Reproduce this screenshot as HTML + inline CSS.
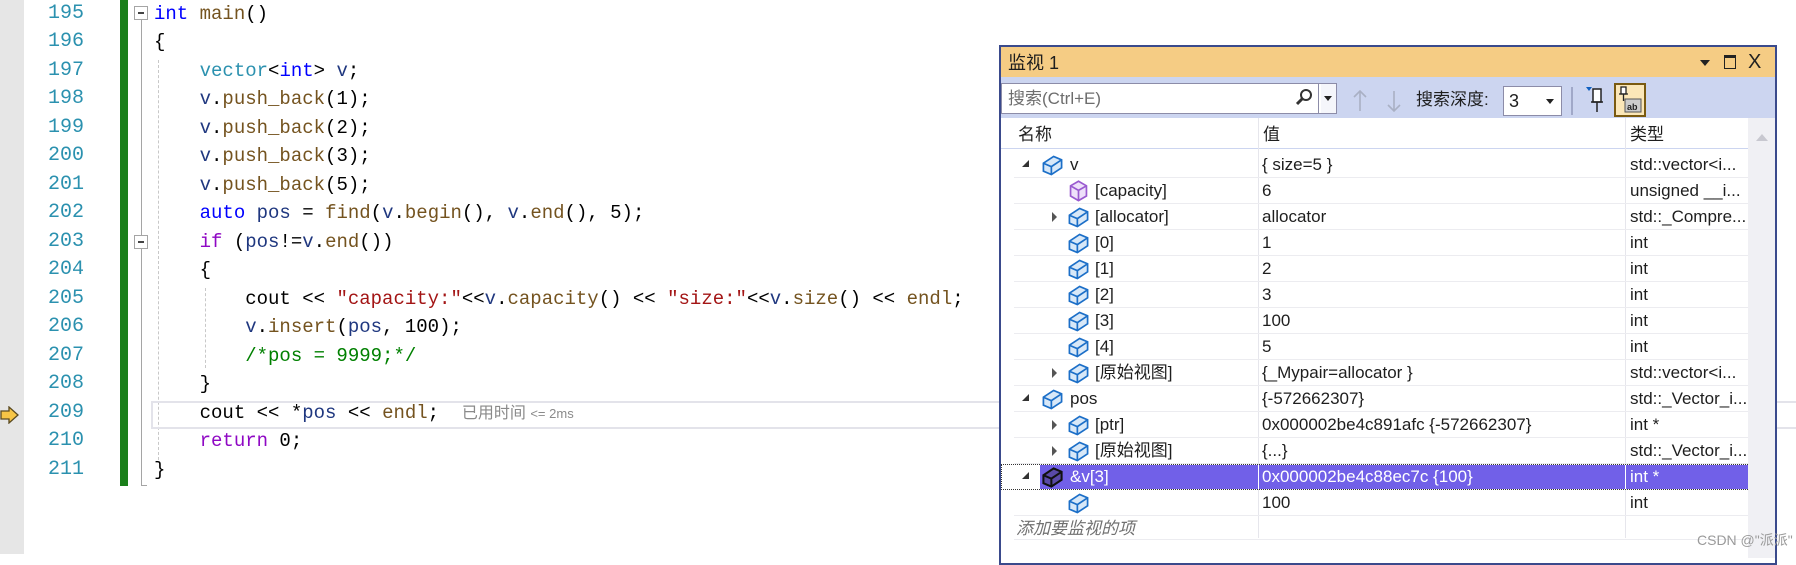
<!DOCTYPE html>
<html><head><meta charset="utf-8"><style>
*{margin:0;padding:0;box-sizing:border-box}
body{width:1796px;height:554px;overflow:hidden;background:#fff;position:relative;font-family:"Liberation Sans","Noto Sans CJK SC",sans-serif}
.abs{position:absolute}
.ln{position:absolute;left:30px;width:54px;text-align:right;color:#2b91af;font-family:"Liberation Mono","Noto Sans CJK SC",monospace;font-size:20px;line-height:28.5px}
.code{position:absolute;left:154px;font-family:"Liberation Mono","Noto Sans CJK SC",monospace;font-size:19px;line-height:28.5px;white-space:pre;color:#000}
.k{color:#0000ff}.t{color:#2b91af}.f{color:#74531f}.s{color:#a31515}.c{color:#008000}.r{color:#8f08c4}.v{color:#1f377f}
.w{font-size:17px;color:#1e1e1e;white-space:nowrap;line-height:20px}
.row{position:absolute;left:1014px;width:734px;height:26px;border-bottom:1px solid #ececf0}
.row span{position:absolute;top:3px}
.row svg{position:absolute;top:1px}
</style></head><body>
<div class="abs" style="left:0;top:0;width:24px;height:554px;background:#e6e6e6"></div>
<div class="ln" style="top:-0.5px">195<br>196<br>197<br>198<br>199<br>200<br>201<br>202<br>203<br>204<br>205<br>206<br>207<br>208<br>209<br>210<br>211</div>
<div class="abs" style="left:120px;top:0;width:8px;height:486px;background:#1a7f1a"></div>
<div class="abs" style="left:141px;top:20px;width:1px;height:466px;background:#a5a5a5"></div>
<div class="abs" style="left:141px;top:485px;width:6px;height:1px;background:#a5a5a5"></div>
<div class="abs" style="left:134px;top:6px;width:14px;height:14px;border:1px solid #a5a5a5;background:#fff"><div style="position:absolute;left:3px;top:5px;width:6px;height:1.5px;background:#444"></div></div>
<div class="abs" style="left:134px;top:235px;width:14px;height:14px;border:1px solid #a5a5a5;background:#fff"><div style="position:absolute;left:3px;top:5px;width:6px;height:1.5px;background:#444"></div></div>
<div class="abs" style="left:158px;top:60px;width:0;height:400px;border-left:1px dashed #c8c8c8"></div>
<div class="abs" style="left:205px;top:288px;width:0;height:80px;border-left:1px dashed #c8c8c8"></div>
<div class="abs" style="left:151px;top:401px;width:1660px;height:28px;border:2px solid #e3e3ea"></div>
<svg class="abs" style="left:0;top:406px" width="20" height="18" viewBox="0 0 20 18"><path d="M1 5 H9 V1 L18 9 L9 17 V13 H1 Z" fill="#f6c546" stroke="#5a4a20" stroke-width="1.3"/></svg>
<div class="code" style="top:-0.5px"><span class="k">int</span> <span class="f">main</span>()
{
    <span class="t">vector</span>&lt;<span class="k">int</span>&gt; <span class="v">v</span>;
    <span class="v">v</span>.<span class="f">push_back</span>(1);
    <span class="v">v</span>.<span class="f">push_back</span>(2);
    <span class="v">v</span>.<span class="f">push_back</span>(3);
    <span class="v">v</span>.<span class="f">push_back</span>(5);
    <span class="k">auto</span> <span class="v">pos</span> = <span class="f">find</span>(<span class="v">v</span>.<span class="f">begin</span>(), <span class="v">v</span>.<span class="f">end</span>(), 5);
    <span class="r">if</span> (<span class="v">pos</span>!=<span class="v">v</span>.<span class="f">end</span>())
    {
        cout &lt;&lt; <span class="s">"capacity:"</span>&lt;&lt;<span class="v">v</span>.<span class="f">capacity</span>() &lt;&lt; <span class="s">"size:"</span>&lt;&lt;<span class="v">v</span>.<span class="f">size</span>() &lt;&lt; <span class="f">endl</span>;
        <span class="v">v</span>.<span class="f">insert</span>(<span class="v">pos</span>, 100);
        <span class="c">/*pos = 9999;*/</span>
    }
    cout &lt;&lt; *<span class="v">pos</span> &lt;&lt; <span class="f">endl</span>;  <span style="color:#8a8a8a;font-family:'Liberation Sans','Noto Sans CJK SC',sans-serif;font-size:16px;line-height:20px">已用时间 <span style="font-size:13px">&lt;= 2ms</span></span>
    <span class="r">return</span> 0;
}</div>

<div class="abs" style="left:999px;top:45px;width:778px;height:520px;border:2px solid #3a4a8c;background:#fff"></div>
<div class="abs" style="left:1001px;top:47px;width:774px;height:30px;background:#f5cc84"></div>
<div class="abs w" style="left:1008px;top:52px;font-size:18px;line-height:22px">监视 1</div>
<div class="abs" style="left:1700px;top:60px;width:0;height:0;border-left:5px solid transparent;border-right:5px solid transparent;border-top:6px solid #222"></div>
<div class="abs" style="left:1724px;top:55px;width:12px;height:14px;border:1.5px solid #222;border-top-width:3px"></div>
<div class="abs w" style="left:1748px;top:51px;font-size:20px;color:#222;line-height:22px">X</div>
<div class="abs" style="left:1001px;top:77px;width:774px;height:41px;background:#ccd5f0"></div>
<div class="abs" style="left:1001px;top:83px;width:336px;height:31px;border:1.5px solid #8c8ca8;background:#fff"></div>
<div class="abs w" style="left:1008px;top:89px;color:#6d6d6d">搜索(Ctrl+E)</div>
<svg class="abs" style="left:1294px;top:88px" width="20" height="20"><circle cx="12" cy="7" r="5" fill="none" stroke="#333" stroke-width="2"/><path d="M8.5 10.5 L3 16" stroke="#333" stroke-width="3"/></svg>
<div class="abs" style="left:1318px;top:84px;width:1px;height:29px;background:#8c8ca8"></div>
<div class="abs" style="left:1321px;top:84px;width:15px;height:29px;background:#f5f6fb"></div>
<div class="abs" style="left:1324px;top:96px;border-left:4px solid transparent;border-right:4px solid transparent;border-top:5px solid #222"></div>
<svg class="abs" style="left:1352px;top:87px" width="60" height="28"><path d="M8 24 V4 M2 10 L8 4 L14 10" fill="none" stroke="#a9b0c4" stroke-width="1.6"/><path d="M42 4 V24 M36 18 L42 24 L48 18" fill="none" stroke="#a9b0c4" stroke-width="1.6"/></svg>
<div class="abs w" style="left:1416px;top:90px">搜索深度:</div>
<div class="abs" style="left:1503px;top:86px;width:59px;height:30px;border:1.5px solid #8c8ca8;background:#fff"></div>
<div class="abs w" style="left:1509px;top:91px;font-size:18px">3</div>
<div class="abs" style="left:1546px;top:99px;border-left:4px solid transparent;border-right:4px solid transparent;border-top:5px solid #222"></div>
<div class="abs" style="left:1571px;top:87px;width:2px;height:28px;background:#a0a8c8"></div>
<svg class="abs" style="left:1584px;top:85px" width="26" height="30"><path d="M2 2 L8 2 L5 6Z" fill="#1060c0"/><rect x="9" y="4" width="8" height="13" fill="#fff" stroke="#222" stroke-width="1.5"/><path d="M7 17 H19 M13 17 V27" stroke="#222" stroke-width="1.5"/></svg>
<div class="abs" style="left:1614px;top:83px;width:32px;height:34px;border:2px solid #7a5a10;background:#fbe7b8"></div>
<svg class="abs" style="left:1616px;top:85px" width="28" height="30"><rect x="5" y="2" width="5" height="7" fill="#fff" stroke="#222" stroke-width="1.3"/><path d="M3 9 H12 M7.5 9 V16" stroke="#222" stroke-width="1.3"/><rect x="9" y="14" width="16" height="13" fill="#ccc" stroke="#555"/><text x="11" y="25" font-size="9" font-family="Liberation Sans" font-weight="bold" fill="#222">ab</text></svg>
<div class="abs" style="left:1001px;top:118px;width:747px;height:31px;border-bottom:1.5px solid #ccd5f0"></div>
<div class="abs w" style="left:1018px;top:125px">名称</div>
<div class="abs w" style="left:1263px;top:125px">值</div>
<div class="abs w" style="left:1630px;top:125px">类型</div>
<div class="abs" style="left:1748px;top:118px;width:27px;height:440px;background:#f0f0f4"></div>
<div class="abs" style="left:1756px;top:134px;border-left:6px solid transparent;border-right:6px solid transparent;border-bottom:7px solid #c8c8d0"></div>
<div class="abs" style="left:1258px;top:118px;width:1px;height:420px;background:#e6e6ec"></div>
<div class="abs" style="left:1625px;top:118px;width:1px;height:420px;background:#e6e6ec"></div>

<svg width="0" height="0" style="position:absolute"><defs>
<symbol id="cb" viewBox="0 0 20 22"><path d="M2 9 L11 3 L18 6 L18 13 L9 19 L2 16 Z" fill="#d8e8f8" stroke="#1c6fc8" stroke-width="1.5"/><path d="M2 9 L9 12 L18 6 M9 12 V19" fill="none" stroke="#1c6fc8" stroke-width="1.5"/></symbol>
<symbol id="cp" viewBox="0 0 20 22"><path d="M3 6 L10 2 L17 6 L17 15 L10 19 L3 15 Z" fill="#eee0fa" stroke="#9a5ad0" stroke-width="1.5"/><path d="M3 6 L10 10 L17 6 M10 10 V19" fill="none" stroke="#9a5ad0" stroke-width="1.5"/></symbol>
<symbol id="ck" viewBox="0 0 20 22"><path d="M2 9 L11 3 L18 6 L18 13 L9 19 L2 16 Z" fill="#5a4aa8" stroke="#111" stroke-width="1.8"/><path d="M2 9 L9 12 L18 6 M9 12 V19" fill="none" stroke="#111" stroke-width="1.8"/></symbol>
</defs></svg>

<div class="row" style="top:152px"><span style="left:8px;top:8px;border-left:7px solid transparent;border-bottom:7px solid #333;width:0;height:0"></span><svg style="left:27px" width="23" height="25"><use href="#cb"/></svg><span class="w" style="left:56px">v</span><span class="w" style="left:248px">{ size=5 }</span><span class="w" style="left:616px">std::vector&lt;i...</span></div>
<div class="row" style="top:178px"><svg style="left:53px" width="23" height="25"><use href="#cp"/></svg><span class="w" style="left:81px">[capacity]</span><span class="w" style="left:248px">6</span><span class="w" style="left:616px">unsigned __i...</span></div>
<div class="row" style="top:204px"><span style="left:38px;top:8px;border-top:5px solid transparent;border-bottom:5px solid transparent;border-left:5px solid #555;width:0;height:0"></span><svg style="left:53px" width="23" height="25"><use href="#cb"/></svg><span class="w" style="left:81px">[allocator]</span><span class="w" style="left:248px">allocator</span><span class="w" style="left:616px">std::_Compre...</span></div>
<div class="row" style="top:230px"><svg style="left:53px" width="23" height="25"><use href="#cb"/></svg><span class="w" style="left:81px">[0]</span><span class="w" style="left:248px">1</span><span class="w" style="left:616px">int</span></div>
<div class="row" style="top:256px"><svg style="left:53px" width="23" height="25"><use href="#cb"/></svg><span class="w" style="left:81px">[1]</span><span class="w" style="left:248px">2</span><span class="w" style="left:616px">int</span></div>
<div class="row" style="top:282px"><svg style="left:53px" width="23" height="25"><use href="#cb"/></svg><span class="w" style="left:81px">[2]</span><span class="w" style="left:248px">3</span><span class="w" style="left:616px">int</span></div>
<div class="row" style="top:308px"><svg style="left:53px" width="23" height="25"><use href="#cb"/></svg><span class="w" style="left:81px">[3]</span><span class="w" style="left:248px">100</span><span class="w" style="left:616px">int</span></div>
<div class="row" style="top:334px"><svg style="left:53px" width="23" height="25"><use href="#cb"/></svg><span class="w" style="left:81px">[4]</span><span class="w" style="left:248px">5</span><span class="w" style="left:616px">int</span></div>
<div class="row" style="top:360px"><span style="left:38px;top:8px;border-top:5px solid transparent;border-bottom:5px solid transparent;border-left:5px solid #555;width:0;height:0"></span><svg style="left:53px" width="23" height="25"><use href="#cb"/></svg><span class="w" style="left:81px">[原始视图]</span><span class="w" style="left:248px">{_Mypair=allocator }</span><span class="w" style="left:616px">std::vector&lt;i...</span></div>
<div class="row" style="top:386px"><span style="left:8px;top:8px;border-left:7px solid transparent;border-bottom:7px solid #333;width:0;height:0"></span><svg style="left:27px" width="23" height="25"><use href="#cb"/></svg><span class="w" style="left:56px">pos</span><span class="w" style="left:248px">{-572662307}</span><span class="w" style="left:616px">std::_Vector_i...</span></div>
<div class="row" style="top:412px"><span style="left:38px;top:8px;border-top:5px solid transparent;border-bottom:5px solid transparent;border-left:5px solid #555;width:0;height:0"></span><svg style="left:53px" width="23" height="25"><use href="#cb"/></svg><span class="w" style="left:81px">[ptr]</span><span class="w" style="left:248px">0x000002be4c891afc {-572662307}</span><span class="w" style="left:616px">int *</span></div>
<div class="row" style="top:438px"><span style="left:38px;top:8px;border-top:5px solid transparent;border-bottom:5px solid transparent;border-left:5px solid #555;width:0;height:0"></span><svg style="left:53px" width="23" height="25"><use href="#cb"/></svg><span class="w" style="left:81px">[原始视图]</span><span class="w" style="left:248px">{...}</span><span class="w" style="left:616px">std::_Vector_i...</span></div>
<div class="abs" style="left:1001px;top:464px;width:747px;height:26px;border:1px dotted #333"></div>
<div class="abs" style="left:1040px;top:465px;width:708px;height:24px;background:#7160e8"></div>
<div class="row" style="top:464px;border:none"><span style="left:8px;top:8px;border-left:7px solid transparent;border-bottom:7px solid #333;width:0;height:0"></span><svg style="left:27px" width="23" height="25"><use href="#ck"/></svg><span class="w" style="left:56px;color:#fff">&amp;v[3]</span><span class="w" style="left:248px;color:#fff">0x000002be4c88ec7c {100}</span><span class="w" style="left:616px;color:#fff">int *</span></div>
<div class="abs" style="left:1258px;top:465px;width:1px;height:24px;background:#fff"></div>
<div class="abs" style="left:1625px;top:465px;width:1px;height:24px;background:#fff"></div>
<div class="row" style="top:490px"><svg style="left:53px" width="23" height="25"><use href="#cb"/></svg><span class="w" style="left:248px">100</span><span class="w" style="left:616px">int</span></div>
<div class="row" style="top:516px;height:24px"><span class="w" style="left:2px;top:3px;color:#707070;font-style:italic">添加要监视的项</span></div>
<div class="abs" style="left:1697px;top:531px;font-size:14px;color:#9a9a9a;white-space:nowrap;line-height:18px">CSDN @"派派"</div>
</body></html>
